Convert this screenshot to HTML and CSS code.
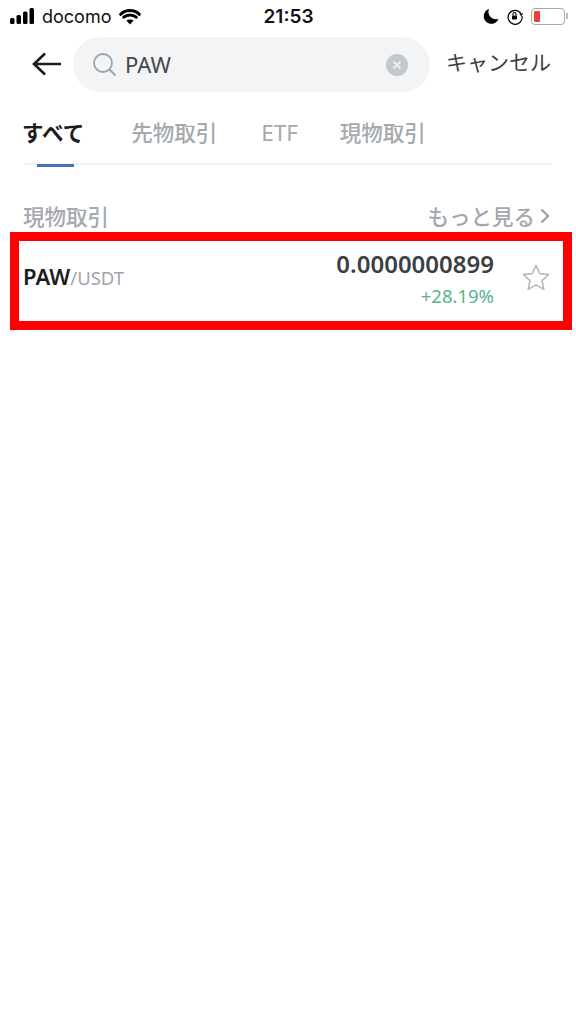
FILE: index.html
```html
<!DOCTYPE html>
<html lang="ja">
<head>
  <meta charset="UTF-8">
  <meta name="viewport" content="width=device-width, initial-scale=1.0">
  <title>PAW</title>
  <link rel="stylesheet" href="styles.css">
</head>
<body>

  <div class="status-bar">
    <div class="status-left">
      <svg class="signal" width="25" height="16" viewBox="0 0 25 16"><rect x="0" y="10" width="4.500" height="6" rx="1.500"/><rect x="6.500" y="7" width="4.500" height="9" rx="1.500"/><rect x="13" y="3.500" width="4.500" height="12.500" rx="1.500"/><rect x="19.500" y="0" width="4.500" height="16" rx="1.500"/></svg>
      <span class="carrier">docomo</span>
      <svg class="wifi" width="24" height="17" viewBox="0 0 24 17"><path d="M2.600 6.300C5.100 3.900 8.400 2.500 12 2.500s6.900 1.400 9.400 3.800" fill="none" stroke="#000" stroke-width="3" stroke-linecap="round"/><path d="M5.800 9.200c1.700-1.500 3.900-2.300 6.200-2.300s4.500.8 6.200 2.300" fill="none" stroke="#000" stroke-width="3" stroke-linecap="round"/><path d="M12 16.500l-3.600-3.900c1-.8 2.300-1.200 3.600-1.200s2.600.4 3.600 1.200z"/></svg>
    </div>
    <div class="clock">21:53</div>
    <div class="status-right">
      <svg width="16" height="16" viewBox="0 0 16 16"><path d="M6 1a7.500 7.500 0 0 0 9.500 9.800A7.600 7.600 0 1 1 6 1z"/></svg>
      <svg width="18" height="18" viewBox="0 0 18 18"><path d="M15 6.500A7 7 0 1 0 16 9" fill="none" stroke="#000" stroke-width="1.200"/><path d="M13.200 6.500h4L15.200 9.300z"/><rect x="6" y="8.500" width="5" height="4" rx=".8"/><path d="M7 8.500V7a1.500 1.500 0 0 1 3 0v1.500" fill="none" stroke="#000" stroke-width="1.100"/></svg>
      <div class="battery"><div class="battery-level"></div></div>
      <div class="battery-tip"></div>
    </div>
  </div>

  <div class="search-row">
    <svg class="back" width="30" height="24" viewBox="0 0 30 24"><path d="M29 12H2M13 1.500L2 12l11 10.500" fill="none" stroke="#1c1c1e" stroke-width="2.600"/></svg>
    <div class="search-box">
      <svg width="25" height="25" viewBox="0 0 25 25"><circle cx="11" cy="11" r="9" fill="none" stroke="#9ea3a8" stroke-width="1.800"/><path d="M17.500 17.500l5.500 5.500" stroke="#9ea3a8" stroke-width="1.800" stroke-linecap="round"/></svg>
      <span class="search-text">PAW</span>
      <svg class="clear" width="22" height="22" viewBox="0 0 22 22"><circle cx="11" cy="11" r="11" fill="#c4c8cc"/><path d="M7.500 7.500l7 7M14.500 7.500l-7 7" stroke="#eef0f1" stroke-width="1.800"/></svg>
    </div>
    <span class="cancel">キャンセル</span>
  </div>

  <div class="tabs">
    <span class="tab tab-active">すべて</span>
    <span class="tab">先物取引</span>
    <span class="tab tab-etf">ETF</span>
    <span class="tab">現物取引</span>
  </div>

  <div class="section-head">
    <span>現物取引</span>
    <span class="more">もっと見る<svg width="10" height="16" viewBox="0 0 10 16"><path d="M1.500 1.500L8 8l-6.500 6.500" fill="none" stroke="#9ea3a8" stroke-width="2.400"/></svg></span>
  </div>

  <div class="result">
    <div class="pair"><b>PAW</b><span>/USDT</span></div>
    <div class="prices">
      <div class="price">0.0000000899</div>
      <div class="change">+28.19%</div>
    </div>
    <svg class="star" width="28" height="27" viewBox="0 0 28 27"><path d="M14 1.500l3.700 8.100 8.800 1-6.500 6 1.800 8.700-7.800-4.400-7.800 4.400 1.800-8.700-6.500-6 8.800-1z" fill="none" stroke="#b9bdc1" stroke-width="1.700" stroke-linejoin="round"/></svg>
  </div>

</body>
</html>
```

FILE: styles.css
```css
body {
  font-family: 'Noto Sans', 'Noto Sans CJK JP', sans-serif;
  background-color: #fff;
  margin: 0;
  padding: 0;
  color: #1c1c1e;
}

.status-bar {
  display: flex;
  align-items: center;
  justify-content: space-between;
  height: 32px;
  padding: 0 8px 0 10px;
  font-family: 'Inter', sans-serif;
  color: #111;
}

.status-left {
  display: flex;
  align-items: center;
  width: 200px;
}

.carrier {
  font-size: 18px;
  margin-left: 7px;
  margin-right: 7px;
}

.clock {
  font-size: 19px;
  font-weight: 600;
  margin-right: 1px;
}

.status-right {
  display: flex;
  align-items: center;
  justify-content: flex-end;
  width: 200px;
  gap: 7px;
}

.battery {
  width: 34px;
  height: 17px;
  box-sizing: border-box;
  border: 1.5px solid #a8a8a8;
  border-radius: 4px;
  padding: 2px;
}

.battery-level {
  width: 6px;
  height: 100%;
  background-color: #e8423c;
  border-radius: 1px;
}

.battery-tip {
  width: 2px;
  height: 6px;
  background-color: #bbb;
  margin-left: -6px;
}

.search-row {
  display: flex;
  align-items: center;
  height: 55px;
  margin-top: 5px;
  padding-left: 32px;
}

.back {
  flex: none;
  margin-bottom: 2px;
}

.search-box {
  display: flex;
  align-items: center;
  width: 357px;
  height: 55px;
  margin-left: 11px;
  padding: 0 22px 0 19px;
  box-sizing: border-box;
  background-color: #f3f4f5;
  border-radius: 28px;
}

.search-text {
  flex: 1;
  margin-left: 8px;
  margin-bottom: 2px;
  font-size: 22px;
  color: #44474a;
}

.cancel {
  margin-left: 16px;
  margin-bottom: 8px;
  font-size: 21px;
  color: #3c3f42;
  white-space: nowrap;
}

.tabs {
  display: flex;
  align-items: flex-start;
  gap: 44px;
  height: 73px;
  margin: 0 24px;
  box-sizing: border-box;
  padding-top: 24px;
  border-bottom: 2px solid #f3f4f5;
}

.tab {
  position: relative;
  font-size: 21.5px;
  line-height: 34px;
  font-weight: 500;
  color: #a4a9ae;
}

.tab-etf {
  font-size: 22.5px;
  font-weight: 400;
  margin-right: -2px;
}

.tab-active {
  font-weight: 700;
  color: #1c1c1e;
  margin-left: -2px;
  margin-right: 3px;
}

.tab-active::after {
  content: "";
  position: absolute;
  left: 15px;
  bottom: -17px;
  width: 37px;
  height: 3px;
  background-color: #4a6fbe;
}

.section-head {
  display: flex;
  justify-content: space-between;
  align-items: center;
  height: 34px;
  margin: 33px 24px 0 23px;
  font-size: 21.5px;
  font-weight: 500;
  color: #a4a9ae;
}

.more {
  display: flex;
  align-items: center;
  margin-right: 2px;
}

.more svg {
  margin-left: 5px;
  margin-top: 1px;
}

.result {
  display: flex;
  align-items: center;
  height: 98px;
  margin: 0 4px 0 10px;
  padding: 0 13px 6px 4px;
  box-sizing: border-box;
  border: 9px solid #f00;
}

.pair {
  flex: 1;
  font-size: 22px;
  margin-bottom: 4px;
}

.pair b {
  font-weight: 600;
  color: #1c1c1e;
}

.pair span {
  font-size: 18.5px;
  color: #a0a5aa;
}

.prices {
  text-align: right;
}

.price {
  font-size: 24px;
  font-weight: 600;
  color: #3c3f42;
  line-height: 30px;
}

.change {
  margin-top: 5px;
  font-size: 18.5px;
  line-height: 24px;
  color: #58b48c;
}

.star {
  margin-left: 28px;
  margin-bottom: 2px;
}
```
